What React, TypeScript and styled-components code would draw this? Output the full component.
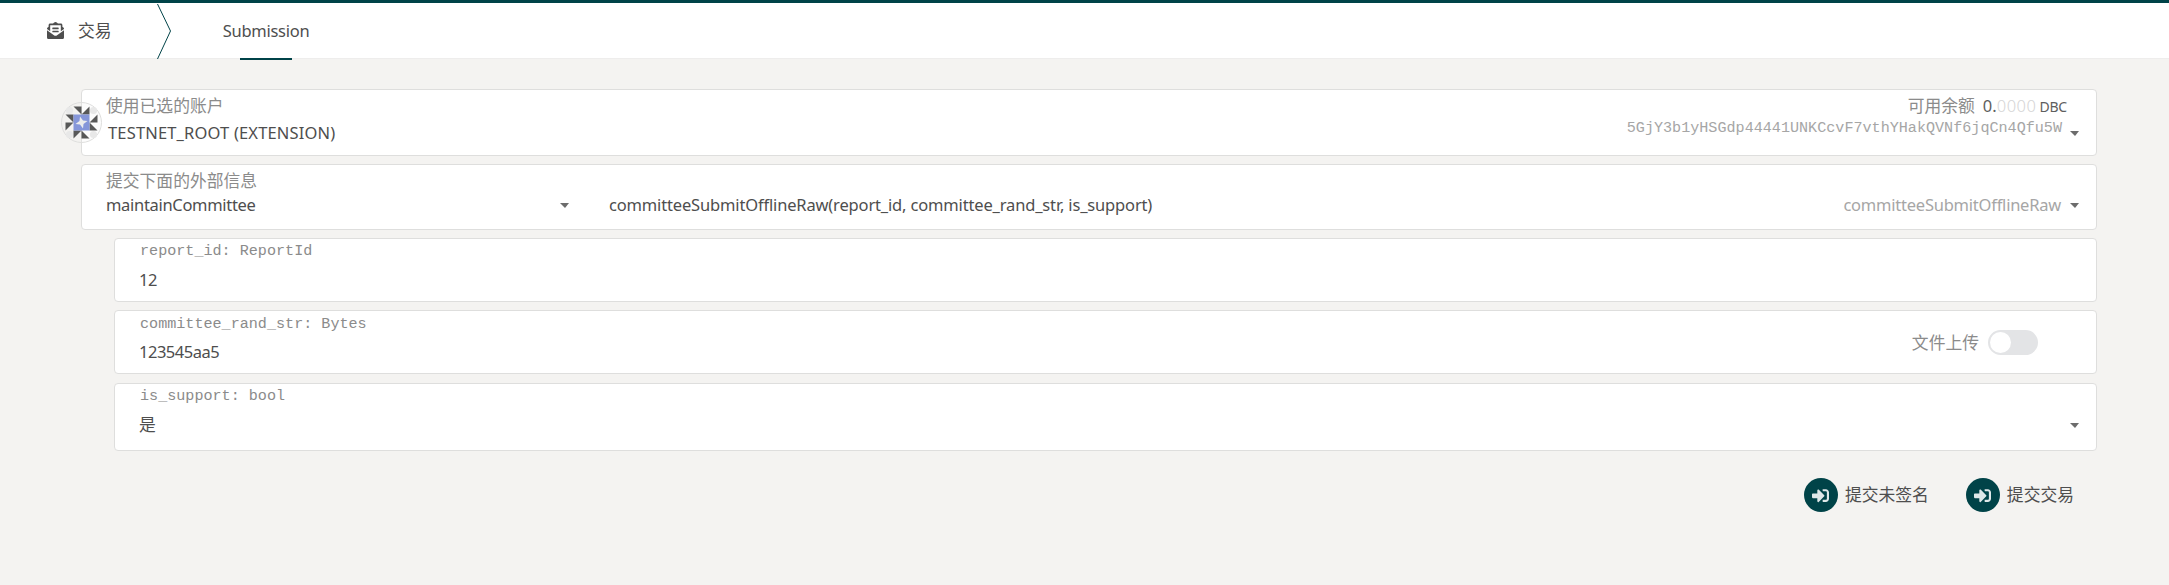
import React from 'react';
import styled, { createGlobalStyle } from 'styled-components';
import { FaEnvelopeOpenText, FaSignInAlt } from 'react-icons/fa';

const GlobalStyle = createGlobalStyle`
  * { box-sizing: border-box; }
  body {
    margin: 0;
    background: #f4f3f1;
    color: #4e4e4e;
    font-family: 'Noto Sans', 'Noto Sans CJK SC', sans-serif;
    font-weight: 400;
    font-size: 16.5px;
    line-height: 24px;
  }
`;

const Page = styled.div`
  min-height: 585px;
  border-top: 3px solid #004348;
`;

const TabBar = styled.nav`
  display: flex;
  height: 56px;
  background: #fff;
  border-bottom: 1px solid #eeedec;
`;

const Section = styled.div`
  display: flex;
  align-items: center;
  gap: 14px;
  width: 157px;
  padding-left: 47px;
`;

const Chevron = styled.svg`
  display: block;
  width: 16px;
  height: 56px;
  fill: none;
  stroke: #004348;
`;

const Tab = styled.a`
  display: flex;
  flex-direction: column;
  align-items: center;
  justify-content: space-between;
  width: 86px;
  height: 57px;
  margin-left: 50px;
  padding-top: 16px;
  letter-spacing: -0.27px;

  &::after {
    content: '';
    width: 52px;
    height: 2px;
    background: #004348;
  }
`;

const Form = styled.main`
  display: flex;
  flex-direction: column;
  gap: 8px;
  padding: 30px 72px 0 81px;
`;

const Card = styled.section<{ $height: number }>`
  position: relative;
  height: ${p => p.$height}px;
  padding: 0 17px 0 24px;
  background: #fff;
  border: 1px solid #dededd;
  border-radius: 4px;
`;

const Params = styled.div`
  display: flex;
  flex-direction: column;
  gap: 8px;
  margin-left: 33px;
`;

const BoolCard = styled(Card)`
  margin-top: 1px;
`;

const Line = styled.div<{ $top?: number; $left?: number }>`
  display: flex;
  align-items: center;
  height: 24px;
  margin-top: ${p => p.$top ?? 0}px;
  padding-left: ${p => p.$left ?? 0}px;
`;

const Label = styled.span`
  color: #8b8b8b;
  font-size: 16.8px;
  white-space: nowrap;
`;

const TypeLabel = styled.span`
  color: #8b8b8b;
  font: 400 15.12px 'Liberation Mono', monospace;
`;

const Value = styled.span<{ $width?: number; $spacing?: number }>`
  width: ${p => (p.$width ? `${p.$width}px` : 'auto')};
  letter-spacing: ${p => p.$spacing ?? 0}px;
  white-space: nowrap;
`;

const Han = styled.span`
  font-size: 16.8px;
`;

const Signature = styled(Value)`
  margin-left: 40px;
`;

const Muted = styled.span<{ $spacing?: number }>`
  margin-left: auto;
  color: #a6a6a6;
  letter-spacing: ${p => p.$spacing ?? 0}px;
`;

const Address = styled.span`
  margin: -10px 0 0 auto;
  color: #a6a6a6;
  font: 400 15.12px 'Liberation Mono', monospace;
`;

const Caret = styled.i<{ $gap?: number }>`
  margin-left: ${p => (p.$gap ? `${p.$gap}px` : 'auto')};
  border: 4.5px solid transparent;
  border-left-width: 5px;
  border-top: 5px solid #6c6c6c;
  border-bottom: 0;
`;

const Balance = styled.span`
  display: flex;
  align-items: baseline;
  margin-left: auto;
  padding-right: 12px;
`;

const Whole = styled.span`
  margin-left: 8px;
  color: #5e5e5e;
`;

const Decimals = styled.span`
  color: #d5d5d5;
  font-weight: 300;
  letter-spacing: 0.5px;
`;

const Unit = styled.span`
  margin-left: 3px;
  color: #5e5e5e;
  font-size: 14px;
  letter-spacing: -0.2px;
`;

const Identicon = styled.svg`
  position: absolute;
  left: -21px;
  top: 11.5px;
  width: 41px;
  height: 41px;
`;

const Upload = styled.div`
  position: absolute;
  top: 19px;
  right: 58px;
  display: flex;
  align-items: center;
  gap: 9px;
`;

const Toggle = styled.span`
  display: flex;
  align-items: center;
  width: 50px;
  height: 25px;
  padding-left: 2px;
  background: #e3e4e6;
  border-radius: 13px;

  &::before {
    content: '';
    width: 21px;
    height: 21px;
    background: #fff;
    border-radius: 50%;
  }
`;

const Actions = styled.div`
  display: flex;
  justify-content: flex-end;
  gap: 37px;
  margin-top: 19px;
  padding-right: 23px;
`;

const Button = styled.button`
  display: flex;
  align-items: center;
  gap: 7px;
  padding: 0;
  border: 0;
  background: none;
  color: inherit;
  font: inherit;
  font-size: 16.8px;
`;

const Disc = styled.span`
  display: flex;
  align-items: center;
  justify-content: center;
  width: 34px;
  height: 34px;
  border-radius: 50%;
  background: #004348;
  color: #dfe8e9;
`;

const AccountIcon = () => (
  <Identicon viewBox="-20.5 -20.5 41 41">
    <circle r="20" fill="#eeeeee" fillOpacity="0.2" stroke="#dededd" />
    {[0, 90, 180, 270].map(a => (
      <circle key={a} cx="-12" cy="-12" r="3.6" fill="#e8e8e8" transform={`rotate(${a})`} />
    ))}
    <path
      fill="#585858"
      d="M-8-16H0V-8Z M8-16V-8H0Z M-16-8H-8V0Z M-16 0H-8L-16 8Z M16-8V0H8Z M8 0L16 8H8Z M-8 8H0L-8 16Z M0 8L8 16H0Z"
    />
    <path fill="#8596d9" d="M-8-8H8V8H-8Z" />
    <path fill="#ececec" d="M-1.5-6L1.5-2L6-1.5L2 1.5L1.5 6L-1.5 2L-6 1.5L-2-1.5Z" />
  </Identicon>
);

const Submit = ({ text }: { text: string }) => (
  <Button>
    <Disc>
      <FaSignInAlt size={17} />
    </Disc>
    {text}
  </Button>
);

export default function App() {
  return (
    <Page>
      <GlobalStyle />
      <TabBar>
        <Section>
          <FaEnvelopeOpenText size={17} />
          <Han>交易</Han>
        </Section>
        <Chevron viewBox="0 0 16 56">
          <path d="M0.5 1L13.5 28L0.5 56" />
        </Chevron>
        <Tab>Submission</Tab>
      </TabBar>
      <Form>
        <Card $height={67}>
          <AccountIcon />
          <Line $top={4}>
            <Label>使用已选的账户</Label>
            <Balance>
              <Label>可用余额</Label>
              <Whole>0.</Whole>
              <Decimals>0000</Decimals>
              <Unit>DBC</Unit>
            </Balance>
          </Line>
          <Line $top={3} $left={2}>
            <Value $spacing={0.16}>TESTNET_ROOT (EXTENSION)</Value>
            <Address>5GjY3b1yHSGdp44441UNKCcvF7vthYHakQVNf6jqCn4Qfu5W</Address>
            <Caret $gap={8} />
          </Line>
        </Card>
        <Card $height={66}>
          <Line $top={4}>
            <Label>提交下面的外部信息</Label>
          </Line>
          <Line>
            <Value $width={446} $spacing={-0.31}>maintainCommittee</Value>
            <Caret $gap={8} />
            <Signature $spacing={-0.16}>
              committeeSubmitOfflineRaw(report_id, committee_rand_str, is_support)
            </Signature>
            <Muted $spacing={-0.23}>committeeSubmitOfflineRaw</Muted>
            <Caret $gap={9} />
          </Line>
        </Card>
        <Params>
          <Card $height={64}>
            <Line $left={1}>
              <TypeLabel>report_id: ReportId</TypeLabel>
            </Line>
            <Line $top={5}>
              <Value $spacing={-0.5}>12</Value>
            </Line>
          </Card>
          <Card $height={64}>
            <Line $left={1} $top={1}>
              <TypeLabel>committee_rand_str: Bytes</TypeLabel>
            </Line>
            <Line $top={4}>
              <Value $spacing={-0.5}>123545aa5</Value>
            </Line>
            <Upload>
              <Label>文件上传</Label>
              <Toggle />
            </Upload>
          </Card>
          <BoolCard $height={68}>
            <Line $left={1}>
              <TypeLabel>is_support: bool</TypeLabel>
            </Line>
            <Line $top={5}>
              <Han>是</Han>
              <Caret />
            </Line>
          </BoolCard>
        </Params>
        <Actions>
          <Submit text="提交未签名" />
          <Submit text="提交交易" />
        </Actions>
      </Form>
    </Page>
  );
}
